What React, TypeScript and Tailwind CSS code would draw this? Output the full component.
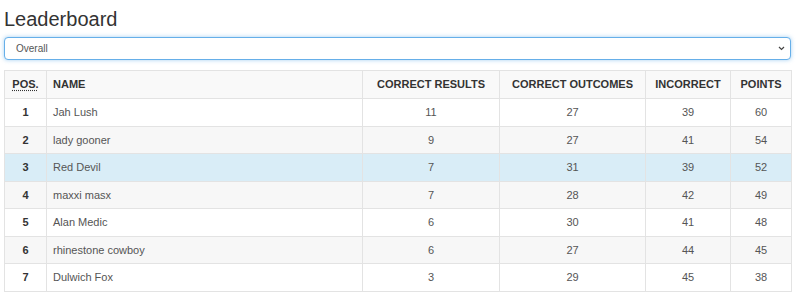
import React from 'react';

const rows = [
  { pos: 1, name: 'Jah Lush', results: 11, outcomes: 27, incorrect: 39, points: 60 },
  { pos: 2, name: 'lady gooner', results: 9, outcomes: 27, incorrect: 41, points: 54 },
  { pos: 3, name: 'Red Devil', results: 7, outcomes: 31, incorrect: 39, points: 52 },
  { pos: 4, name: 'maxxi masx', results: 7, outcomes: 28, incorrect: 42, points: 49 },
  { pos: 5, name: 'Alan Medic', results: 6, outcomes: 30, incorrect: 41, points: 48 },
  { pos: 6, name: 'rhinestone cowboy', results: 6, outcomes: 27, incorrect: 44, points: 45 },
  { pos: 7, name: 'Dulwich Fox', results: 3, outcomes: 29, incorrect: 45, points: 38 },
];

// background per row: striped, with the current user's row highlighted
const rowBg = (i: number) => {
  if (i === 2) return 'bg-[#d9edf7]';
  return i % 2 === 1 ? 'bg-[#f7f7f7]' : 'bg-white';
};

const App = () => {
  return (
    <div className="w-[800px] h-[306px] bg-white px-[4px] pt-[7px] font-['Liberation_Sans',Arial,sans-serif] text-[#333]">
      <h1 className="text-[20px] leading-[24px] font-normal">Leaderboard</h1>

      <div className="relative mt-[6px] w-[787px] h-[23px] rounded-[4px] border border-[#66afe9] shadow-[0_0_4px_rgba(102,175,233,0.6)] bg-white flex items-center pl-[11px]">
        <span className="text-[10px] text-[#555]">Overall</span>
        <svg className="absolute right-[5px] top-[8px]" width="7" height="5" viewBox="0 0 7 5">
          <path d="M1 1l2.5 2.5L6 1" fill="none" stroke="#444" strokeWidth="1.2" />
        </svg>
      </div>

      <table className="mt-[10px] w-[787px] border-collapse table-fixed text-[11px]">
        <colgroup>
          <col className="w-[42px]" />
          <col className="w-[316px]" />
          <col className="w-[137px]" />
          <col className="w-[146px]" />
          <col className="w-[85px]" />
          <col className="w-[61px]" />
        </colgroup>
        <thead>
          <tr className="h-[28px] bg-[#f9f9f9]">
            <th className="border border-[#e3e3e3] font-bold text-center">
              <abbr className="underline decoration-dotted underline-offset-2" title="Position">POS.</abbr>
            </th>
            <th className="border border-[#e3e3e3] font-bold text-left pl-[6px]">NAME</th>
            <th className="border border-[#e3e3e3] font-bold text-center">CORRECT RESULTS</th>
            <th className="border border-[#e3e3e3] font-bold text-center">CORRECT OUTCOMES</th>
            <th className="border border-[#e3e3e3] font-bold text-center">INCORRECT</th>
            <th className="border border-[#e3e3e3] font-bold text-center">POINTS</th>
          </tr>
        </thead>
        <tbody>
          {rows.map((r, i) => (
            <tr key={r.pos} className={`h-[27.5px] ${rowBg(i)}`}>
              <td className="border border-[#e3e3e3] text-center font-bold">{r.pos}</td>
              <td className="border border-[#e3e3e3] text-left pl-[6px] text-[#555]">{r.name}</td>
              <td className="border border-[#e3e3e3] text-center text-[#555]">{r.results}</td>
              <td className="border border-[#e3e3e3] text-center text-[#555]">{r.outcomes}</td>
              <td className="border border-[#e3e3e3] text-center text-[#555]">{r.incorrect}</td>
              <td className="border border-[#e3e3e3] text-center text-[#555]">{r.points}</td>
            </tr>
          ))}
        </tbody>
      </table>
    </div>
  );
};

export default App;
